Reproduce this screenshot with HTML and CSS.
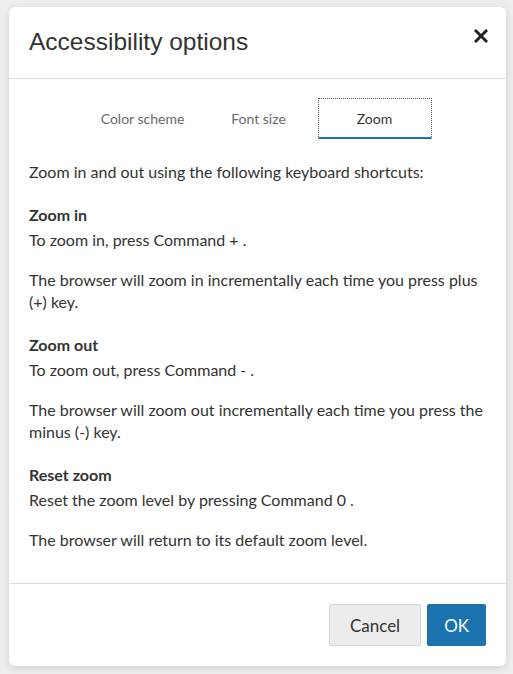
FILE: index.html
```html
<!DOCTYPE html>
<html lang="en">
<head>
    <meta charset="utf-8">
    <title>Accessibility options</title>
    <meta name="viewport" content="width=device-width, initial-scale=1.0">
    <link rel="stylesheet" href="styles.css">
</head>
<body>
    <div class="modal">
        <div class="modal-header">
            <h2 class="modal-title">Accessibility options</h2>
            <button class="close-btn" aria-label="Close">
                <svg width="14" height="14" viewBox="0 0 14 14">
                    <path d="M2 2 L12 12 M12 2 L2 12" stroke="#222" stroke-width="3" stroke-linecap="square"/>
                </svg>
            </button>
        </div>

        <div class="modal-body">
            <ul class="tabs">
                <li class="tab">Color scheme</li>
                <li class="tab">Font size</li>
                <li class="tab active">Zoom</li>
            </ul>

            <div class="tab-pane">
                <p>Zoom in and out using the following keyboard shortcuts:</p>

                <h5>Zoom in</h5>
                <p>To zoom in, press Command + .</p>
                <p>The browser will zoom in incrementally each time you press plus (+) key.</p>

                <h5>Zoom out</h5>
                <p>To zoom out, press Command - .</p>
                <p>The browser will zoom out incrementally each time you press the minus (-) key.</p>

                <h5>Reset zoom</h5>
                <p>Reset the zoom level by pressing Command 0 .</p>
                <p>The browser will return to its default zoom level.</p>
            </div>
        </div>

        <div class="modal-footer">
            <button class="btn btn-secondary">Cancel</button>
            <button class="btn btn-primary">OK</button>
        </div>
    </div>
</body>
</html>
```

FILE: styles.css
```css
body {
    margin: 0;
    background-color: #eeeeee;
    font-family: Lato, "Open Sans", sans-serif;
    color: #333;
    padding: 7px 7px 8px 9px;
}
.modal {
    background-color: #fff;
    width: 497px;
    border-radius: 6px;
    box-shadow: 0 2px 8px rgba(0, 0, 0, 0.12);
}
.modal-header {
    display: flex;
    justify-content: space-between;
    align-items: flex-start;
    height: 71px;
    border-bottom: 1px solid #dedede;
    padding: 0 18px 0 20px;
}
.modal-title {
    margin: 21px 0 0;
    font-family: "Liberation Sans", Arial, sans-serif;
    font-weight: normal;
    font-size: 24.5px;
    line-height: 28px;
    color: #333;
}
.close-btn {
    background: none;
    border: none;
    padding: 0;
    margin-top: 22px;
    width: 14px;
    height: 14px;
    cursor: pointer;
}
.close-btn svg {
    display: block;
}
.modal-body {
    padding: 19px 20px 14px;
}
.tabs {
    display: flex;
    justify-content: center;
    list-style: none;
    margin: 0 0 22px 2px;
    padding: 0;
}
.tab {
    width: 112px;
    margin: 0 1px;
    height: 38px;
    line-height: 39px;
    text-align: center;
    font-size: 14px;
    color: #6a6a6a;
    border: 1px dotted transparent;
    border-bottom: 2px solid transparent;
}
.tab.active {
    color: #333;
    border-color: #555;
    border-bottom: 2px solid #1a73ae;
}
.tab-pane {
    font-size: 16px;
    line-height: 22px;
}
.tab-pane p {
    margin: 0 0 18px;
}
.tab-pane h5 {
    margin: 21px 0 3px;
    font-size: 16px;
    line-height: 22px;
    font-weight: bold;
}
.modal-footer {
    display: flex;
    justify-content: flex-end;
    gap: 6px;
    border-top: 1px solid #dedede;
    padding: 20px 20px 20px;
}
.btn {
    font-family: Lato, "Open Sans", sans-serif;
    font-size: 17px;
    height: 42px;
    padding: 0 20px;
    border-radius: 2px;
    cursor: pointer;
}
.btn-secondary {
    background-color: #ececec;
    color: #333;
    border: 1px solid #d6d6d6;
}
.btn-primary {
    background-color: #1a73ae;
    color: #fff;
    border: 1px solid #1a73ae;
    padding: 0 16px;
}
```
